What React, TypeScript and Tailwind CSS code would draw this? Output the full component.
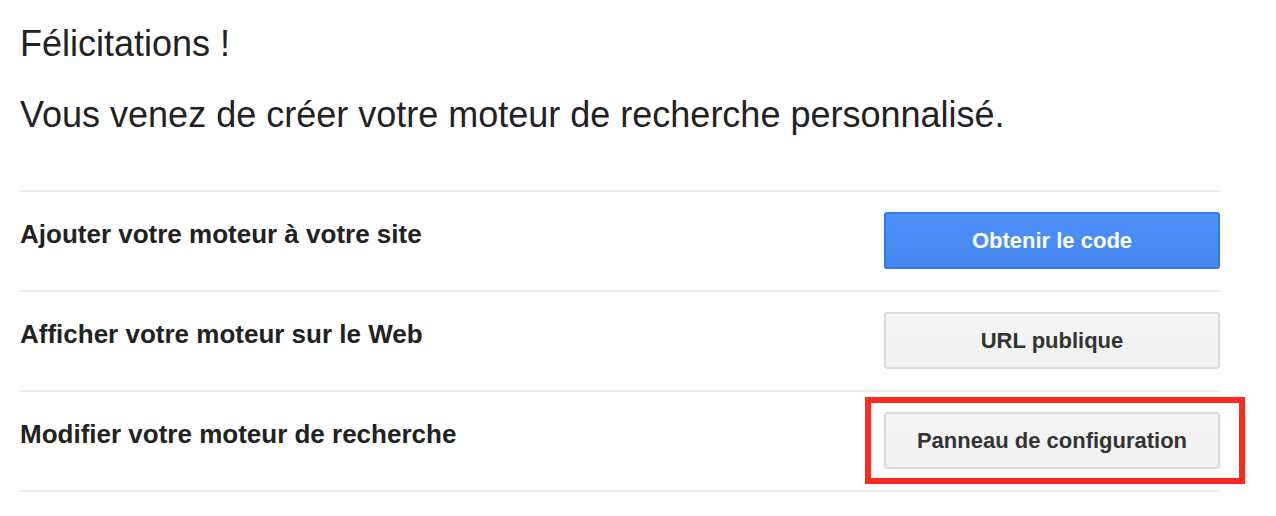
import React from 'react'

const rows = [
  { label: 'Ajouter votre moteur à votre site', button: 'Obtenir le code', primary: true },
  { label: 'Afficher votre moteur sur le Web', button: 'URL publique' },
  { label: 'Modifier votre moteur de recherche', button: 'Panneau de configuration', highlight: true },
]

function ActionButton({ text, primary }: { text: string; primary?: boolean }) {
  if (primary) {
    return (
      <button className="flex h-[57px] w-[336px] items-center justify-center rounded-[3px] border-2 border-[#3079ed] bg-gradient-to-b from-[#4d90fe] to-[#4787ed] text-[22px] font-bold text-white">
        {text}
      </button>
    )
  }
  return (
    <button className="flex h-[57px] w-[336px] items-center justify-center rounded-[3px] border-2 border-[#d9d9d9] bg-gradient-to-b from-[#f5f5f5] to-[#f1f1f1] text-[22px] font-bold text-[#333]">
      {text}
    </button>
  )
}

export default function App() {
  return (
    <div className="min-h-[516px] bg-white pl-5 pt-[26px] font-['Liberation_Sans',Arial,sans-serif] text-[#222]">
      <div className="w-[1200px]">
        <h1 className="text-[36px] leading-[36px]">Félicitations !</h1>
        <p className="mt-[35px] text-[36px] leading-[36px]">
          Vous venez de créer votre moteur de recherche personnalisé.
        </p>

        <div className="mt-[57px] border-b-2 border-[#ebebeb]">
          {rows.map((row) => (
            <div
              key={row.label}
              className="flex items-start justify-between border-t-2 border-[#ebebeb] pt-5 pb-[21px]"
            >
              <div className="mt-[9px] text-[26px] font-bold leading-[26px]">{row.label}</div>
              <div className="relative">
                <ActionButton text={row.button} primary={row.primary} />
                {row.highlight && (
                  <div className="pointer-events-none absolute -top-[15px] -bottom-[15px] -left-[19px] -right-[25px] border-[6px] border-[#ff2a1f]" />
                )}
              </div>
            </div>
          ))}
        </div>
      </div>
    </div>
  )
}
